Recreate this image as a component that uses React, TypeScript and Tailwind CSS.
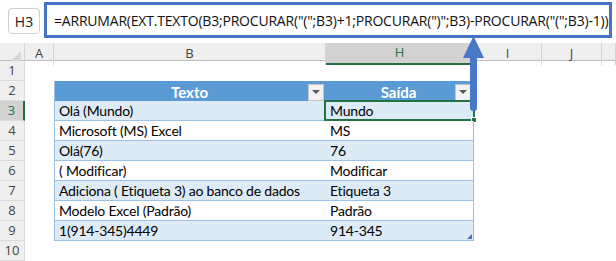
import { Fragment } from 'react';

const rows: [string, string][] = [
  ['Olá (Mundo)', 'Mundo'],
  ['Microsoft (MS) Excel', 'MS'],
  ['Olá(76)', '76'],
  ['( Modificar)', 'Modificar'],
  ['Adiciona ( Etiqueta 3) ao banco de dados', 'Etiqueta 3'],
  ['Modelo Excel (Padrão)', 'Padrão'],
  ['1(914-345)4449', '914-345'],
];

const cols = ['A', 'B', 'H', 'I', 'J', ''];

const formula = '=ARRUMAR(EXT.TEXTO(B3;PROCURAR("(";B3)+1;PROCURAR(")";B3)-PROCURAR("(";B3)-1))';

function HeaderCell({ label, edge }: { label: string; edge: string }) {
  return (
    <div className={`grid h-[20px] grid-cols-[1fr_auto_1fr] items-center bg-[#5b9bd5] pr-[2px] text-[15px] font-bold tracking-normal text-white ${edge}`}>
      <span />
      <span>{label}</span>
      <div className="flex h-[17px] w-[16px] items-center justify-center justify-self-end border border-[#c4c4c4] bg-[#f2f2f2]">
        <div className="h-0 w-0 border-x-[4px] border-t-[4px] border-x-transparent border-t-[#595959]" />
      </div>
    </div>
  );
}

export default function App() {
  const gridCols = 'grid grid-cols-[25px_29px_272px_148px_68px_60px_1fr]';

  return (
    <div className="relative h-[261px] w-[616px] overflow-hidden bg-white font-['Lato',sans-serif] text-[14px] tracking-[-0.2px] text-black">
      {/* formula bar */}
      <div className="flex h-[43px] items-start gap-[4px] pt-[2px] pl-[8px]">
        <div className="mt-[6px] flex h-[26px] w-[32px] items-center justify-center rounded-[4px] border border-[#cfcfcf] bg-white font-['Open_Sans',sans-serif] text-[14px] tracking-normal text-[#222]">
          H3
        </div>
        <div className="flex h-[36px] w-[568px] items-center border-[3px] border-[#4472c4] bg-white pl-[7px] font-['Open_Sans',sans-serif] text-[14px] tracking-[-0.2px] whitespace-nowrap text-[#111]">
          {formula}
        </div>
      </div>

      {/* column headers */}
      <div className={`${gridCols} h-[18px] border-b border-[#bdbdbd] bg-[#efefef] font-['Open_Sans',sans-serif] text-[13px] tracking-normal text-[#444]`}>
        <div className="flex items-end justify-end border-r border-[#d4d4d4] p-[3px]">
          <div className="h-0 w-0 border-b-[11px] border-l-[11px] border-l-transparent border-b-[#d6d6d6]" />
        </div>
        {cols.map((c) => (
          <div
            key={c || 'k'}
            className={
              c === 'H'
                ? 'flex items-center justify-center border-r border-b-2 border-[#d4d4d4] border-b-[#217346] bg-[#d2d2d2] text-[#217346]'
                : 'flex items-center justify-center border-r border-[#d4d4d4]'
            }
          >
            {c}
          </div>
        ))}
      </div>

      {/* rows */}
      <div className={gridCols}>
        {Array.from({ length: 10 }, (_, i) => {
          const n = i + 1;
          const data = n >= 3 && n <= 9 ? rows[n - 3] : null;
          const band = n % 2 === 1 ? 'bg-[#ddebf7]' : 'bg-white';
          return (
            <Fragment key={n}>
              <div
                className={
                  n === 3
                    ? 'flex h-[20px] items-center justify-center border-r-2 border-b border-[#dcdcdc] border-r-[#217346] bg-[#d2d2d2] font-["Open_Sans",sans-serif] text-[13px] tracking-normal text-[#217346]'
                    : 'flex h-[20px] items-center justify-center border-r border-b border-[#dcdcdc] bg-[#efefef] font-["Open_Sans",sans-serif] text-[13px] tracking-normal text-[#444]'
                }
              >
                {n}
              </div>
              <div className="h-[20px]" />
              {n === 2 ? (
                <>
                  <HeaderCell label="Texto" edge="border-l border-[#9bc2e6]" />
                  <HeaderCell label="Saída" edge="border-r border-[#9bc2e6]" />
                </>
              ) : data ? (
                <>
                  <div className={`flex h-[20px] items-center border-b border-l border-[#9bc2e6] pl-[4px] whitespace-nowrap ${band}`}>
                    {data[0]}
                  </div>
                  <div className={`relative flex h-[20px] items-center border-r border-b border-[#9bc2e6] pl-[4px] whitespace-nowrap ${band}`}>
                    {data[1]}
                    {n === 3 && (
                      <div className="absolute -top-[1px] -left-[2px] -right-[2px] -bottom-[1px] border-2 border-[#217346]">
                        <div className="absolute -right-[4px] -bottom-[4px] h-[6px] w-[6px] border border-white bg-[#217346]" />
                      </div>
                    )}
                    {n === 9 && (
                      <div className="absolute right-[1px] bottom-[1px] h-0 w-0 border-b-[5px] border-l-[5px] border-l-transparent border-b-[#4472c4]" />
                    )}
                  </div>
                </>
              ) : (
                <>
                  <div className="h-[20px]" />
                  <div className="h-[20px]" />
                </>
              )}
              <div className="h-[20px]" />
              <div className="h-[20px]" />
              <div className="h-[20px]" />
            </Fragment>
          );
        })}
      </div>

      {/* arrow pointing at the formula */}
      <svg className="absolute left-[462px] top-[36px]" width="24" height="76" viewBox="0 0 24 76">
        <path d="M11.5 0 L22 22 L15 22 L15 72 Q15 75 12 75 L11 75 Q8 75 8 72 L8 22 L1 22 Z" fill="#4a78c8" />
      </svg>
    </div>
  );
}
